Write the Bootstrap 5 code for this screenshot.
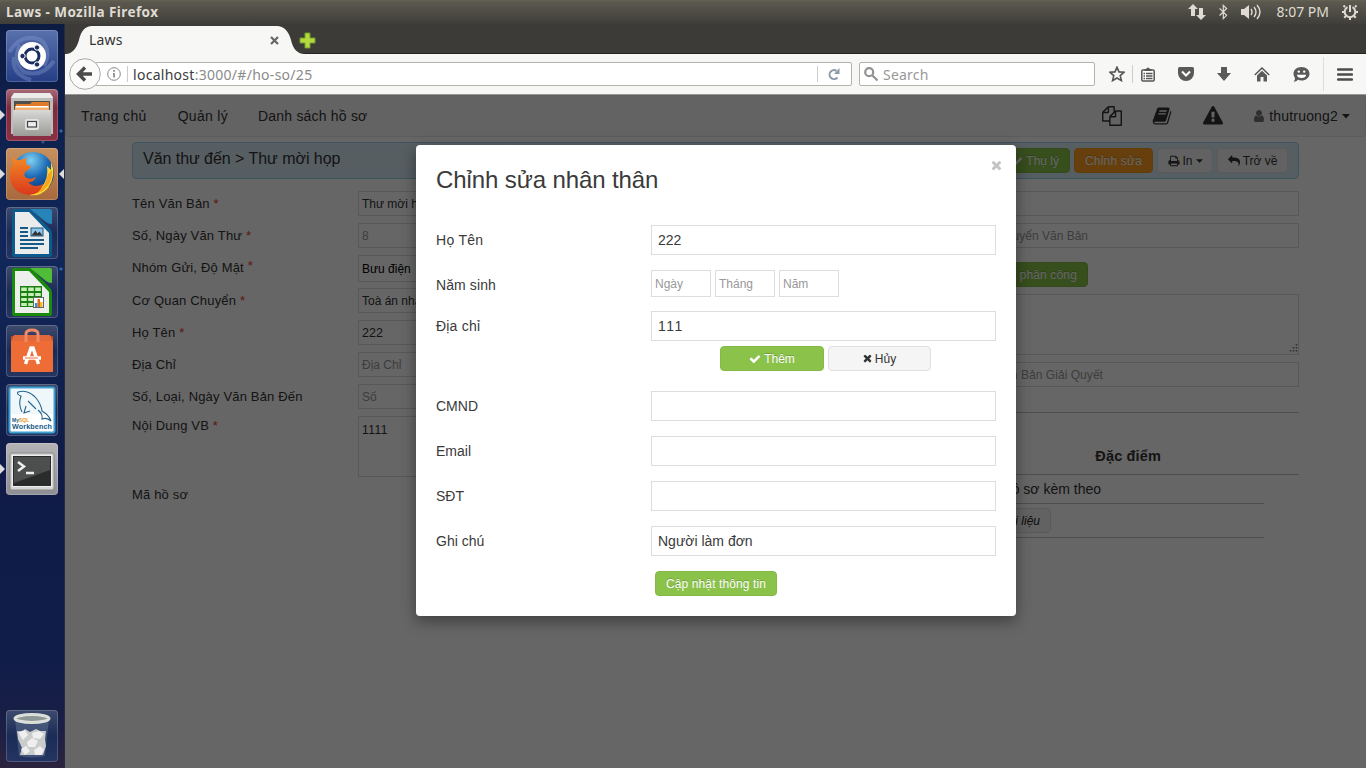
<!DOCTYPE html>
<html lang="vi">
<head>
<meta charset="utf-8">
<meta name="viewport" content="width=device-width, initial-scale=1">
<title>Laws</title>
<link href="https://cdn.jsdelivr.net/npm/bootstrap@5.3.0/dist/css/bootstrap.min.css" rel="stylesheet">
<style>
body{width:1366px;height:768px;overflow:hidden;font-family:"Liberation Sans",Arial,sans-serif;font-size:14px;line-height:20px;color:#333;background:#3c3b37;white-space:nowrap}
svg{display:block;flex:none}
.ui{font-family:"Noto Sans",sans-serif}
.panel-top{height:24px;background:linear-gradient(#656352,#5b594f 2px,#3f3e39);color:#dfdbd2;font-size:13px}
.launcher{width:65px;background:radial-gradient(circle at 61px 107px,#3567a5 0 1px,transparent 2px),radial-gradient(circle at 43px 118px,#2a5590 0 1px,transparent 2px),radial-gradient(circle at 61px 245px,#3567a5 0 1px,transparent 2px),linear-gradient(#0c1b42,#11275a 30%,#101c47 60%,#101d48 85%,#191f46 94%,#2c243e);padding:6px 7px 6px 6px;gap:7px;border-right:1px solid #252b45}
.tile{position:relative;width:52px;height:52px;border-radius:4px;background:linear-gradient(#3c4a6c,#1a2b58 50%,#243561);box-shadow:inset 0 0 0 1px #ffffff30}
.pip::before{content:"";position:absolute;left:-6px;top:21px;border:5px solid transparent;border-left:5px solid #dcdcdc;border-right:0}
.pip-r::after{content:"";position:absolute;right:-6px;top:21px;border:5px solid transparent;border-right:5px solid #dcdcdc;border-left:0}
.tabstrip{height:30px;background:#3c3b37;border-bottom:1px solid #252420}
.tab-shape{position:absolute;left:0;top:2px}
.tab-body{width:230px;height:29px;padding:0 14px 0 24px}
.toolbar-ff{height:40px;background:#f7f7f5;color:#3c3c3c;font-size:14px}
.field-ff{height:24px;background:#fff;border:1px solid #b4b4ac;border-radius:2px}
.page{border-top:1px solid #989892;background:#fff}
.site-nav{height:42px;background:#f8f8f8;border:1px solid #e7e7e7;border-top-color:#efefef;border-radius:4px;padding:0 15px}
.wrap{margin:5px 67px 0 67px}
.crumbs{height:37px;border:1px solid #9acfea;border-radius:4px;background:linear-gradient(#d9edf7,#d5eaf4);padding:0 10px;font-size:16px}
.b{height:25px;border:1px solid #e0e0e0;border-radius:4px;font-size:12px;line-height:1;display:inline-flex;align-items:center;justify-content:center;gap:3px;padding:0 10px;background:#f5f5f5;color:#333}
.b-green{background:#8bc34a;border-color:#84b947;color:#fff;text-shadow:0 -1px 0 #0003}
.b-orange{background:#ff9f1e;border-color:#f39a20;color:#fff;text-shadow:0 -1px 0 #0003}
.lab{font-size:13px;letter-spacing:.17px}
.lab i{font-style:normal;color:#e8392a}
.left-form{display:grid;grid-template-columns:226px 320px;grid-template-rows:25px 25px 26px 25px 25px 25px 25px 61px 25px;row-gap:7px;margin-top:12px}
.left-form .lab{align-self:center}
.inp{border:1px solid #ddd;font-size:12px;padding-left:3px;display:flex;align-items:center;background:#fff}
.inp.pick{height:27px}
.hint{color:#999}
.right-form{width:350px;margin-top:12px}
.right-form .inp{height:25px;padding:0}
.endtext{width:138px;text-align:right}
.shade{position:absolute;inset:0;background:rgba(0,0,0,.6)}
.dlg{position:absolute;left:351px;top:50px;width:600px;height:471px;background:#fff;border-radius:4px;box-shadow:0 5px 15px rgba(0,0,0,.4);padding:0 20px;color:#3a3a3a}
.dlg h2{font-size:24px;font-weight:400;line-height:30px;letter-spacing:-.1px;margin:20px 0 30px}
.frow{display:grid;grid-template-columns:215px 345px;align-items:center;margin-bottom:15px}
.frow .inp{height:30px;font-size:14px;padding-left:6px}
.frow .inp.mini{width:60px;height:27px;font-size:12px;padding-left:3px}
</style>
</head>
<body class="d-flex flex-column">
<svg width="0" height="0" class="position-absolute"><defs>
<symbol id="check" viewBox="0 0 1792 1792"><path d="M1671 566q0 40-28 68l-724 724-136 136q-28 28-68 28t-68-28l-136-136-362-362q-28-28-28-68t28-68l136-136q28-28 68-28t68 28l294 295 656-657q28-28 68-28t68 28l136 136q28 28 28 68z"/></symbol>
<symbol id="times" viewBox="200 250 1392 1392"><path d="M1490 1322q0 40-28 68l-136 136q-28 28-68 28t-68-28l-294-294-294 294q-28 28-68 28t-68-28l-136-136q-28-28-28-68t28-68l294-294-294-294q-28-28-28-68t28-68l136-136q28-28 68-28t68 28l294 294 294-294q28-28 68-28t68 28l136 136q28 28 28 68t-28 68l-294 294 294 294q28 28 28 68z"/></symbol>
</defs></svg>

<header class="panel-top ui d-flex align-items-center flex-shrink-0 ps-2 pe-2">
  <b style="margin-left:-2px;font-size:13.500px;letter-spacing:.42px">Laws - Mozilla Firefox</b>
  <div class="d-flex align-items-center ms-auto">
    <svg width="18" height="16" viewBox="0 0 18 16" fill="#dfdbd2"><path d="M5 0l5 5H7v7H3V5H0zM11 4h4v7h3l-5 5-5-5h3z"/></svg>
    <svg class="ms-3" style="margin-left:13px!important;margin-right:13px" width="9" height="16" viewBox="0 0 9 16" fill="none" stroke="#dfdbd2" stroke-width="1.2"><path d="M0.6 4.3l7 7L4.3 14.600V1.400L7.600 4.500l-7 7"/></svg>
    <svg width="21" height="16" viewBox="0 0 21 16" fill="#dfdbd2"><path d="M0 5h3l5-4v14l-5-4H0z"/><path d="M10 5q2 3 0 6M13 3q4 5 0 10M16 1q6 7 0 14" fill="none" stroke="#dfdbd2" stroke-width="1.4"/></svg>
    <span style="margin:0 13px 0 14px;font-size:14px">8:07 PM</span>
    <svg width="16" height="16" viewBox="0 0 16 16" fill="none" stroke="#dfdbd2"><path d="M5.500 3.200a5.300 5.300 0 1 0 5 0" stroke-width="2"/><path d="M8 1v7" stroke-width="2"/><path d="M3 3L1.500 1.500M13 3l1.500-1.500M2.500 8H0M13.500 8H16M4 12l-1.800 1.800M12 12l1.800 1.800M8 13.500V16" stroke-width="2"/></svg>
  </div>
</header>

<div class="d-flex flex-grow-1">
  <aside class="launcher d-flex flex-column flex-shrink-0">
    <div class="tile" style="background:linear-gradient(#5971ad,#263e85)"><svg width="52" height="52" viewBox="0 0 52 52"><g fill="none" stroke="#8299cf" stroke-width="4" opacity=".4"><path d="M3 22Q16 2 35 10Q46 20 38 36M48 31Q36 48 18 42Q6 32 14 15M25 50Q5 44 8 27"/></g><circle cx="26" cy="26" r="14" fill="#fff"/><circle cx="26" cy="26" r="7" fill="none" stroke="#192d63" stroke-width="3"/><g fill="#192d63" stroke="#fff" stroke-width="1"><circle cx="16.500" cy="26" r="2.700"/><circle cx="31" cy="17.500" r="2.700"/><circle cx="31" cy="34.500" r="2.700"/></g></svg></div>
    <div class="tile pip" style="background:linear-gradient(#a86a78,#7c2c40 35%,#8c3044)"><svg width="52" height="52" viewBox="0 0 52 52"><defs><linearGradient id="cab" x2="0" y2="1"><stop stop-color="#d8d8d6"/><stop offset="1" stop-color="#9b9b98"/></linearGradient></defs><path d="M8 4h36l3 4v37H5V8z" fill="#bdbdba"/><path d="M8 4h36l3 5H5z" fill="#ebebe9"/><path d="M8 12h36v10H8z" fill="#4f4f4c"/><path d="M10 15h14l2-2h17v9H9z" fill="#e07a2b"/><path d="M9 17h34v5H9z" fill="#f4b173"/><path d="M10 17h32v1.500H10z" fill="#fff"/><path d="M7 21h38v26H7z" fill="url(#cab)"/><rect x="19" y="30" width="14" height="11" rx="2" fill="#e3e3e1"/><rect x="21.500" y="32.500" width="9" height="5.500" fill="#eee" stroke="#444" stroke-width="1.200"/></svg></div>
    <div class="tile pip pip-r" style="background:linear-gradient(#c8905f,#a8693c)"><svg width="52" height="52" viewBox="0 0 52 52"><defs><radialGradient id="glb" cx=".45" cy=".2" r=".8"><stop stop-color="#7fd0f3"/><stop offset=".5" stop-color="#1b6ab5"/><stop offset="1" stop-color="#0c2f72"/></radialGradient><linearGradient id="fox" x2="0" y2="1"><stop stop-color="#f48a25"/><stop offset="1" stop-color="#d9391c"/></linearGradient></defs><circle cx="27" cy="25" r="21" fill="url(#glb)"/><path d="M45 14Q51 27 42 40Q34 49 23 47L35 40Q43 31 41 18L45 22z" fill="#ffd72e"/><path d="M46 22Q47 36 35 44L29 46Q40 39 42 26z" fill="#f6a51f"/><path d="M6 8Q9 13 14 12L21 10Q19 14 21 17L25 18Q24 21 19 24Q17 28 21 30Q25 32 30 29Q28 35 22 34Q28 41 37 36Q34 47 23 47Q6 45 4 30Q3 21 7 16z" fill="url(#fox)"/></svg></div>
    <div class="tile"><svg width="52" height="52" viewBox="0 0 52 52"><path d="M8 2h14q3 0 5 2l17 18q2 2 2 5v21q0 2-2 2H8q-2 0-2-2V4q0-2 2-2z" fill="#0e5a8d"/><path d="M9 5h14l20 21v21H9z" fill="#e9eceb"/><path d="M24 2h20q2 0 2 2v13q-4 0-6-2z" fill="#2784b9"/><path d="M14 21h8M14 25h8M14 29h8M14 33h24M14 37h24M14 41h18" stroke="#145987" stroke-width="2"/><rect x="25" y="21" width="12" height="8" fill="#8fc6e7" stroke="#145987"/><path d="M25.500 28.500l4-5 2 3 2-2 3 4z" fill="#333"/></svg></div>
    <div class="tile"><svg width="52" height="52" viewBox="0 0 52 52"><path d="M8 2h14q3 0 5 2l17 18q2 2 2 5v21q0 2-2 2H8q-2 0-2-2V4q0-2 2-2z" fill="#1b8a0c"/><path d="M9 5h14l20 21v21H9z" fill="#ecefeb"/><path d="M24 2h20q2 0 2 2v13q-4 0-6-2z" fill="#4fbd38"/><rect x="14" y="20" width="22" height="21" fill="#1c7e10"/><path d="M15.200 21.500h5.600v3.500h-5.600zm7 0h5.600v3.500h-5.600zm7 0h5.600v3.500h-5.600zM15.200 27h5.600v3h-5.600zm7 0h5.600v3h-5.600zm7 0h5.600v3h-5.600zM15.200 32h5.600v3h-5.600zm7 0h5.600v3h-5.600zM15.200 37h5.600v3h-5.600zm7 0h5.600v3h-5.600z" fill="#c5f0b8"/><rect x="27.500" y="31.500" width="10" height="10" fill="#fff" stroke="#666"/><path d="M29 41v-4h2.500v4z" fill="#2196d8"/><path d="M31.500 41v-8H34v8z" fill="#e36a1a"/><path d="M34 41v-5h2.500v5z" fill="#f3b829"/></svg></div>
    <div class="tile"><svg width="52" height="52" viewBox="0 0 52 52"><path d="M5 11h42v36H5z" fill="#ee6c36"/><path d="M5 11h42v5H5z" fill="#b94b23"/><path d="M8 10h36l3 6H5z" fill="#e0683a"/><path d="M20 17V9q0-4 6-4t6 4v8" fill="none" stroke="#ef8a63" stroke-width="3"/><path d="M19.500 39l5.500-16h2l5.500 16" fill="none" stroke="#fff" stroke-width="3.500"/><path d="M17 33h18" stroke="#fff" stroke-width="3.500"/><path d="M19 33h13" stroke="#ee6c36"/></svg></div>
    <div class="tile"><svg width="52" height="52" viewBox="0 0 52 52"><rect x="3.500" y="3.500" width="45" height="45" rx="2" fill="#fff" stroke="#3ba0cf" stroke-width="2"/><path d="M5 5h42v25H5z" fill="#eff7fa"/><path d="M16 28Q12 20 15 12Q10 10 12 8Q22 5 30 14Q35 20 36 27Q43 31 45 37Q41 33 36 35Q37 30 32 26M20 22L18 29L24 27M22 17L30 25" fill="none" stroke="#27658c" stroke-width="1.100"/><text x="6" y="37.500" font-size="5" font-weight="bold" fill="#135a86" font-family="Liberation Sans,sans-serif">My<tspan fill="#eb9a27">SQL</tspan></text><text x="6" y="45" font-size="7.200" font-weight="bold" fill="#135a86" font-family="Liberation Sans,sans-serif" textLength="40">Workbench</text></svg></div>
    <div class="tile pip" style="background:linear-gradient(#b4b4b7,#8e9096)"><svg width="52" height="52" viewBox="0 0 52 52"><rect x="4" y="10" width="44" height="37" rx="2" fill="#d5d5d5" stroke="#888"/><rect x="6.500" y="12.500" width="39" height="31" fill="#2a2b2b" stroke="#eee"/><path d="M8 14h36v13L8 40z" fill="#4d4e4e"/><path d="M12 19l6 4.500-6 4.500M20 30h8" fill="none" stroke="#eee" stroke-width="2.500"/></svg></div>
    <div class="tile mt-auto"><svg width="52" height="52" viewBox="0 0 52 52"><path d="M9 9l4 37q13 3 26 0l4-37z" fill="#8c9aaf" opacity=".3"/><path d="M11 21l5 1 3-3 5 3 6-3 4 2 6 0-1 8 1 7-3 9H14l2-7-4-9z" fill="#c9cccb"/><path d="M12 22l7-2 3 5-5 5zm14 1l7-2 5 3-4 5-7-1zm-5 9l5-4 6 3-3 6-7 0zm-6 7l5-3 4 5-5 4zm13 1l6-4 4 4-3 5h-6z" fill="#eeefee"/><ellipse cx="26" cy="8.500" rx="17" ry="4" fill="#8f9797" stroke="#dcdfda" stroke-width="3"/></svg></div>
  </aside>

  <div class="d-flex flex-column flex-grow-1">
    <div class="tabstrip ui position-relative d-flex flex-shrink-0" style="font-size:14px">
      <svg class="tab-shape" width="240" height="28" viewBox="0 0 240 28"><path d="M0 28Q10 28 14 14Q17 0 27 0H212Q222 0 226 14Q229 28 240 28z" fill="#f7f7f5"/></svg>
      <div class="tab-body position-relative d-flex align-items-center justify-content-between"><span style="padding-top:3px;letter-spacing:.2px">Laws</span><svg class="mt-1" width="9" height="9" viewBox="0 0 9 9" style="margin-right:2px"><path d="M1 1l7 7M8 1L1 8" stroke="#666" stroke-width="2.200"/></svg></div>
      <svg class="position-relative" style="margin:8px 0 0 4px" width="17" height="17" viewBox="0 0 17 17"><path d="M6 1h5v5h5v5h-5v5H6v-5H1V6h5z" fill="#b5d840" stroke="#6f9e2b"/></svg>
    </div>
    <div class="toolbar-ff ui d-flex align-items-center flex-shrink-0">
      <svg style="margin-left:4px;z-index:1" width="32" height="32" viewBox="0 0 32 32"><circle cx="16" cy="16" r="15.300" fill="#fbfbfa" stroke="#a9a9a4"/><path d="M23 16H11M16 9.500L9.500 16l6.500 6.500" fill="none" stroke="#4c4c4c" stroke-width="3.400"/></svg>
      <div class="field-ff d-flex align-items-center" style="width:757px;margin-left:-6px;padding-left:11px">
        <svg width="14" height="14" viewBox="0 0 14 14"><circle cx="7" cy="7" r="6.300" fill="none" stroke="#888"/><path d="M7 6v4.500M7 3v1.700" stroke="#777" stroke-width="1.500"/></svg>
        <span style="border-left:1px solid #ccc;height:16px;margin:0 5px 0 6px"></span>
        <span style="letter-spacing:.28px;padding-top:1px">localhost<span style="color:#8b8b8b">:3000/#/ho-so/25</span></span>
        <span class="ms-auto" style="border-left:1px solid #ccc;height:16px"></span>
        <svg style="margin:0 11px 0 10px" width="12" height="13" viewBox="0 0 12 13"><path d="M9.500 9.500A4.500 4.500 0 1 1 8.500 2.800" fill="none" stroke="#8b9aa8" stroke-width="2"/><path d="M11.500 0v6H6z" fill="#8b9aa8"/></svg>
      </div>
      <div class="field-ff d-flex align-items-center" style="width:236px;margin-left:7px;padding-left:4px;color:#999">
        <svg width="14" height="14" viewBox="0 0 14 14" fill="none" stroke="#929292" stroke-width="2.200"><circle cx="5.200" cy="5.200" r="4"/><path d="M8.500 8.500l5 5"/></svg><span style="margin-left:5px;padding-top:1px;letter-spacing:.2px">Search</span>
      </div>
      <svg style="margin-left:14px" width="16" height="16" viewBox="0 0 16 16"><path d="M8 1.200l2 4.700 5 .4-3.800 3.300 1.200 5L8 12l-4.400 2.600 1.200-5L1 6.300l5-.4z" fill="none" stroke="#555" stroke-width="1.600"/></svg>
      <span style="border-left:1px solid #ccc;height:18px;margin:0 8px 0 7px"></span>
      <svg width="14" height="15" viewBox="0 0 14 15"><rect x=".8" y="3" width="12.400" height="11" rx="1.200" fill="#fff" stroke="#555" stroke-width="1.500"/><path d="M3.500 4V2H5Q7-1 9 2h1.500v2z" fill="#555"/><path d="M2.500 6.500H4M2.500 9H4M2.500 11.500H4M5 6.500h6.500M5 9h6.500M5 11.500h6.500" stroke="#555" stroke-width="1.300"/></svg>
      <svg style="margin-left:23px" width="16" height="14" viewBox="0 0 16 14"><path d="M1.500 0h13Q16 0 16 1.500V6a8 8 0 0 1-16 0V1.500Q0 0 1.500 0z" fill="#5a5a5a"/><path d="M4 4.500l4 4 4-4" fill="none" stroke="#fff" stroke-width="2"/></svg>
      <svg style="margin-left:23px" width="14" height="14" viewBox="0 0 14 14"><path d="M4 0h6v6h4l-7 8-7-8h4z" fill="#5a5a5a"/></svg>
      <svg style="margin-left:23px" width="16" height="15" viewBox="0 0 16 15"><path d="M.8 8L8 1l7.200 7" fill="none" stroke="#555" stroke-width="1.500"/><path d="M3 8.500l5-4.800 5 4.800v6H9.500V10h-3v4.500H3z" fill="#5a5a5a"/></svg>
      <svg style="margin-left:23px" width="17" height="15" viewBox="0 0 17 15"><path d="M8.500 0C13 0 16.500 2.800 16.500 6.700S13 13.500 8.500 13.500q-2 0-3.500-.7Q3.500 14.700.5 14.700 2.300 13 2 11 .500 9 .500 6.700C.5 2.800 4 0 8.500 0z" fill="#5a5a5a"/><path d="M3.800 7.800h9.400q-.7 3.200-4.700 3.200T3.800 7.800z" fill="#fff"/><circle cx="5.800" cy="4.600" r="1.200" fill="#fff"/><circle cx="11.200" cy="4.600" r="1.200" fill="#fff"/></svg>
      <span style="border-left:1px solid #ddd;height:34px;margin:0 13px 0 13px"></span>
      <svg width="16" height="13" viewBox="0 0 16 13"><path d="M1 1.500h14M1 6.500h14M1 11.500h14" stroke="#4c4c4c" stroke-width="2.500" stroke-linecap="round"/></svg>
    </div>

    <main class="page position-relative flex-grow-1">
      <nav class="site-nav d-flex align-items-center">
        <span style="letter-spacing:.35px">Trang chủ</span><span style="margin-left:31px;letter-spacing:.3px">Quản lý</span><span style="margin-left:30px;letter-spacing:.2px">Danh sách hồ sơ</span>
        <div class="ms-auto d-flex align-items-center">
          <svg width="20" height="20" viewBox="0 0 1792 1792"><path d="M1696 384q40 0 68 28t28 68v1216q0 40-28 68t-68 28h-960q-40 0-68-28t-28-68v-288h-544q-40 0-68-28t-28-68v-672q0-40 20-88t48-76l408-408q28-28 76-48t88-20h416q40 0 68 28t28 68v328q68-40 128-40h416zm-544 213l-299 299h299v-299zm-640-384l-299 299h299v-299zm196 647l316-316v-416h-384v416q0 40-28 68t-68 28h-416v640h512v-256q0-40 20-88t48-76zm956 804v-1152h-384v416q0 40-28 68t-68 28h-416v640h896z" fill="#333"/></svg>
          <svg style="margin-left:30px" width="20" height="20" viewBox="0 0 1792 1792"><path d="M1703 478q40 57 18 129l-275 906q-19 64-76.500 107.500t-122.500 43.500h-923q-77 0-148.500-53.500t-99.500-131.500q-24-67-2-127 0-4 3-27t4-37q1-8-3-21.500t-3-19.500q2-11 8-21t16.500-23.500 16.500-23.500q23-38 45-91.500t30-91.500q3-10 .5-30t-.5-28q3-11 17-28t17-23q21-36 42-92t25-90q1-9-2.500-32t.5-28q4-13 22-30.500t22-22.500q19-26 42.500-84.500t27.500-96.500q1-8-3-25.500t-2-26.500q2-8 9-18t18-23 17-21q8-12 16.500-30.500t15-35 16-36 19.500-32 26.500-23.500 36-11.500 47.500 5.500l-1 3q38-9 51-9h761q74 0 114 56t18 130l-274 906q-36 119-71.500 153.500t-128.500 34.500h-869q-27 0-38 15-11 16-1 43 24 70 144 70h923q29 0 56-15.500t35-41.500l300-987q7-22 5-57 38 15 59 43zm-1064 2q-4 13 2 22.500t20 9.500h608q13 0 25.500-9.500t16.500-22.500l21-64q4-13-2-22.500t-20-9.500h-608q-13 0-25.500 9.500t-16.500 22.500zm-83 256q-4 13 2 22.500t20 9.500h608q13 0 25.500-9.500t16.500-22.500l21-64q4-13-2-22.500t-20-9.500h-608q-13 0-25.500 9.500t-16.500 22.500z" fill="#333"/></svg>
          <svg style="margin-left:31px" width="20" height="20" viewBox="0 0 1792 1792"><path d="M1024 1375v-190q0-14-9.500-23.500t-22.500-9.500h-192q-13 0-22.500 9.500t-9.500 23.500v190q0 14 9.500 23.500t22.500 9.500h192q13 0 22.500-9.500t9.500-23.500zm-2-374l18-459q0-12-10-19-13-11-24-11h-220q-11 0-24 11-10 7-10 21l17 457q0 10 10 16.500t24 6.500h185q14 0 23.500-6.500t10.500-16.500zm-14-934l768 1408q35 63-2 126-17 29-46.500 46t-63.500 17h-1536q-34 0-63.500-17t-46.500-46q-37-63-2-126l768-1408q17-31 47-49t65-18 65 18 47 49z" fill="#333"/></svg>
          <svg style="margin-left:29px" width="14" height="14" viewBox="0 0 1792 1792"><path d="M1536 1399q0 109-62.500 187t-150.500 78h-854q-88 0-150.500-78t-62.500-187q0-85 8.500-160.500t31.500-152 58.500-131 94-89 134.500-34.500q131 128 313 128t313-128q76 0 134.500 34.500t94 89 58.500 131 31.500 152 8.500 160.500zm-256-887q0 159-112.500 271.500t-271.500 112.500-271.500-112.500-112.500-271.500 112.500-271.500 271.500-112.500 271.500 112.500 112.500 271.500z" fill="#777"/></svg>
          <span style="margin-left:3px;letter-spacing:.18px">thutruong2</span>
          <svg style="margin-left:4px" width="8" height="5" viewBox="0 0 8 5"><path d="M0 0h8L4 4.500z" fill="#333"/></svg>
        </div>
      </nav>

      <div class="wrap">
        <div class="crumbs d-flex align-items-center">
          <span style="margin-top:-3px;letter-spacing:-.04px">Văn thư đến &gt; Thư mời họp</span>
          <div class="ms-auto d-flex gap-1">
            <span class="b b-green"><svg width="12" height="12" fill="#fff"><use href="#check"/></svg>Thụ lý</span>
            <span class="b b-orange" style="width:79px;letter-spacing:.2px">Chỉnh sửa</span>
            <span class="b" style="width:56px"><svg width="12" height="12" viewBox="0 0 1792 1792"><path d="M448 1536h896v-256h-896v256zm0-640h896v-384h-160q-40 0-68-28t-28-68v-160h-640v640zm1152 64q0-26-19-45t-45-19-45 19-19 45 19 45 45 19 45-19 19-45zm128 0v416q0 13-9.500 22.500t-22.500 9.500h-224v160q0 40-28 68t-68 28h-960q-40 0-68-28t-28-68v-160h-224q-13 0-22.500-9.500t-9.500-22.500v-416q0-79 56.500-135.500t135.500-56.500h64v-544q0-40 28-68t68-28h672q40 0 88 20t76 48l152 152q28 28 48 76t20 88v256h64q79 0 135.500 56.500t56.500 135.500z" fill="#333"/></svg>In<svg width="7" height="4" viewBox="0 0 8 4"><path d="M0 0h8L4 4z" fill="#333"/></svg></span>
            <span class="b" style="width:71px"><svg width="12" height="12" viewBox="0 0 1792 1792"><path d="M1792 1120q0 166-127 451-3 7-10.500 24t-13.500 30-13 22q-12 17-28 17-15 0-23.500-10t-8.500-25q0-9 2.500-26.500t2.500-23.500q5-68 5-123 0-101-17.500-181t-48.500-138.500-80-101-105.500-69.500-133-42.500-154-21.500-175.500-6h-224v256q0 26-19 45t-45 19-45-19l-512-512q-19-19-19-45t19-45l512-512q19-19 45-19t45 19 19 45v256h224q713 0 875 403 53 134 53 333z" fill="#333"/></svg>Trở về</span>
          </div>
        </div>

        <div class="d-flex justify-content-between">
          <div class="left-form">
            <span class="lab">Tên Văn Bản <i>*</i></span><div class="inp">Thư mời họp</div>
            <span class="lab">Số, Ngày Văn Thư <i>*</i></span><div class="inp hint">8</div>
            <span class="lab">Nhóm Gửi, Độ Mật <i style="position:relative;top:-2px">*</i></span><div class="inp pick" style="color:#000">Bưu điện</div>
            <span class="lab">Cơ Quan Chuyển <i>*</i></span><div class="inp">Toà án nhân dân</div>
            <span class="lab">Họ Tên <i>*</i></span><div class="inp" style="font-size:12.500px">222</div>
            <span class="lab">Địa Chỉ</span><div class="inp hint">Địa Chỉ</div>
            <span class="lab">Số, Loại, Ngày Văn Bản Đến</span><div class="inp hint">Số</div>
            <span class="lab align-self-start">Nội Dung VB <i>*</i></span><div class="inp align-items-start" style="padding-top:3px;letter-spacing:.5px">1111</div>
            <span class="lab" style="margin-top:-4px">Mã hồ sơ</span>
          </div>
          <div class="right-form">
            <div class="inp"></div>
            <div class="inp hint" style="margin-top:7px"><span class="endtext">Chuyển Văn Bản</span></div>
            <div style="margin-top:14px;width:139px" class="d-flex justify-content-end"><span class="b b-green" style="letter-spacing:.15px">Văn bản phân công</span></div>
            <div class="inp align-items-end justify-content-end" style="height:61px;margin-top:7px"><svg width="11" height="11" viewBox="0 0 11 11"><path d="M9.500 1v9M6.500 4v6M3.500 7v3" stroke="#777" stroke-width="1.500" stroke-dasharray="1.500 1.500"/></svg></div>
            <div class="inp hint" style="margin-top:7px"><span class="endtext" style="width:153px;letter-spacing:.05px">Số Văn Bản Giải Quyết</span></div>
            <div style="margin-top:25px;height:62px;border-top:1px solid #c4c4c4;padding:33px 138px 0 0;text-align:right;font-size:14.500px;letter-spacing:.15px"><b>Đặc điểm</b></div>
            <div style="border-top:1px solid #c4c4c4;height:29px;padding:4px 198px 0 0;text-align:right">Hồ sơ kèm theo</div>
            <div style="border-top:1px solid #c4c4c4;border-bottom:1px solid #c4c4c4;margin-right:35px;height:35px;padding:4px 213px 0 0;text-align:right"><span class="b fst-italic" style="color:#222;vertical-align:top">Tài liệu</span></div>
          </div>
        </div>
      </div>

      <div class="shade"></div>

      <section class="dlg" role="dialog">
        <svg style="position:absolute;right:14px;top:15px" width="11" height="11" fill="#c4c4c4"><use href="#times"/></svg>
        <h2>Chỉnh sửa nhân thân</h2>
        <div class="frow"><span style="letter-spacing:.3px">Họ Tên</span><div class="inp">222</div></div>
        <div class="frow" style="margin-bottom:14px"><span style="padding-top:3px;letter-spacing:.1px">Năm sinh</span><div class="d-flex gap-1"><div class="inp mini hint">Ngày</div><div class="inp mini hint">Tháng</div><div class="inp mini hint">Năm</div></div></div>
        <div class="frow" style="margin-bottom:5px"><span style="letter-spacing:.2px">Địa chỉ</span><div class="inp" style="letter-spacing:.5px;font-kerning:none">111</div></div>
        <div class="d-flex gap-1" style="margin:0 0 20px 284px"><span class="b b-green" style="width:104px"><svg width="12" height="12" fill="#fff"><use href="#check"/></svg>Thêm</span><span class="b" style="width:103px"><svg width="9" height="9" fill="#333"><use href="#times"/></svg>Hủy</span></div>
        <div class="frow"><span>CMND</span><div class="inp"></div></div>
        <div class="frow"><span>Email</span><div class="inp"></div></div>
        <div class="frow"><span>SĐT</span><div class="inp"></div></div>
        <div class="frow"><span>Ghi chú</span><div class="inp">Người làm đơn</div></div>
        <span class="b b-green" style="width:122px;margin-left:219px;letter-spacing:.1px">Cập nhật thông tin</span>
      </section>
    </main>
  </div>
</div>
<script src="https://cdn.jsdelivr.net/npm/bootstrap@5.3.0/dist/js/bootstrap.bundle.min.js"></script>
</body>
</html>
